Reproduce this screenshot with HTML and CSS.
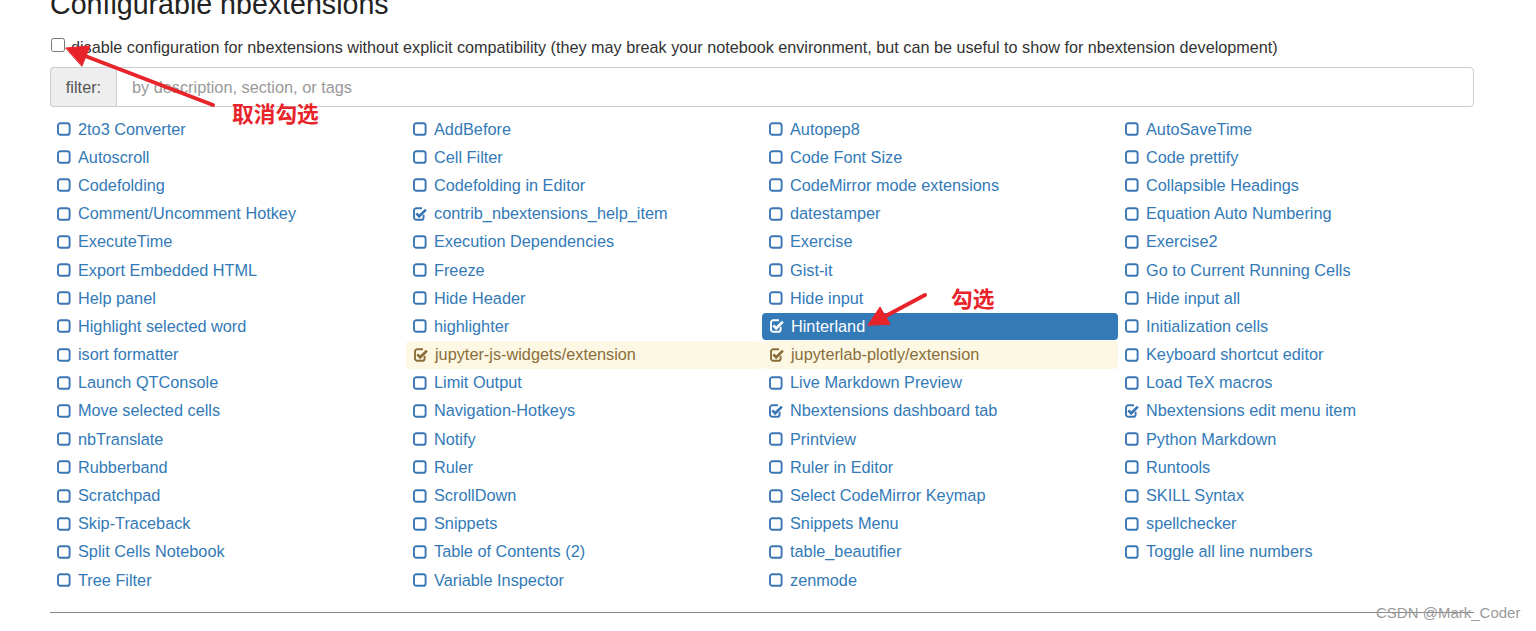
FILE: index.html
```html
<!DOCTYPE html>
<html>
<head>
<meta charset="utf-8">
<link rel="stylesheet" href="styles.css">
</head>
<body>
<svg width="0" height="0" class="defs">
  <defs>
    <symbol id="sq" viewBox="0 0 14 14">
      <rect x="1" y="1.2" width="11.6" height="11.6" rx="2.4" fill="none" stroke="currentColor" stroke-width="1.9"/>
    </symbol>
    <symbol id="ck" viewBox="0 0 14 14">
      <path d="M10.6 7.8V10.4a2.4 2.4 0 0 1-2.4 2.4H3.4a2.4 2.4 0 0 1-2.4-2.4V3.6a2.4 2.4 0 0 1 2.4-2.4H9" fill="none" stroke="currentColor" stroke-width="1.9"/>
      <path d="M3.3 6.4 6.2 9.3 12.9 2.6" fill="none" stroke="currentColor" stroke-width="2.7" stroke-linejoin="miter"/>
    </symbol>
  </defs>
</svg>
<div class="page">
  <h3 class="title">Configurable nbextensions</h3>
  <label class="compat"><input type="checkbox" class="compat-box"><span>disable configuration for nbextensions without explicit compatibility (they may break your notebook environment, but can be useful to show for nbextension development)</span></label>
  <div class="filter">
    <span class="filter-addon">filter:</span>
    <input class="filter-input" type="text" placeholder="by description, section, or tags">
  </div>
  <div class="grid">
    <div class="item"><svg class="ic"><use href="#sq"/></svg><span>2to3 Converter</span></div>
    <div class="item"><svg class="ic"><use href="#sq"/></svg><span>AddBefore</span></div>
    <div class="item"><svg class="ic"><use href="#sq"/></svg><span>Autopep8</span></div>
    <div class="item"><svg class="ic"><use href="#sq"/></svg><span>AutoSaveTime</span></div>

    <div class="item"><svg class="ic"><use href="#sq"/></svg><span>Autoscroll</span></div>
    <div class="item"><svg class="ic"><use href="#sq"/></svg><span>Cell Filter</span></div>
    <div class="item"><svg class="ic"><use href="#sq"/></svg><span>Code Font Size</span></div>
    <div class="item"><svg class="ic"><use href="#sq"/></svg><span>Code prettify</span></div>

    <div class="item"><svg class="ic"><use href="#sq"/></svg><span>Codefolding</span></div>
    <div class="item"><svg class="ic"><use href="#sq"/></svg><span>Codefolding in Editor</span></div>
    <div class="item"><svg class="ic"><use href="#sq"/></svg><span>CodeMirror mode extensions</span></div>
    <div class="item"><svg class="ic"><use href="#sq"/></svg><span>Collapsible Headings</span></div>

    <div class="item"><svg class="ic"><use href="#sq"/></svg><span>Comment/Uncomment Hotkey</span></div>
    <div class="item"><svg class="ic"><use href="#ck"/></svg><span>contrib_nbextensions_help_item</span></div>
    <div class="item"><svg class="ic"><use href="#sq"/></svg><span>datestamper</span></div>
    <div class="item"><svg class="ic"><use href="#sq"/></svg><span>Equation Auto Numbering</span></div>

    <div class="item"><svg class="ic"><use href="#sq"/></svg><span>ExecuteTime</span></div>
    <div class="item"><svg class="ic"><use href="#sq"/></svg><span>Execution Dependencies</span></div>
    <div class="item"><svg class="ic"><use href="#sq"/></svg><span>Exercise</span></div>
    <div class="item"><svg class="ic"><use href="#sq"/></svg><span>Exercise2</span></div>

    <div class="item"><svg class="ic"><use href="#sq"/></svg><span>Export Embedded HTML</span></div>
    <div class="item"><svg class="ic"><use href="#sq"/></svg><span>Freeze</span></div>
    <div class="item"><svg class="ic"><use href="#sq"/></svg><span>Gist-it</span></div>
    <div class="item"><svg class="ic"><use href="#sq"/></svg><span>Go to Current Running Cells</span></div>

    <div class="item"><svg class="ic"><use href="#sq"/></svg><span>Help panel</span></div>
    <div class="item"><svg class="ic"><use href="#sq"/></svg><span>Hide Header</span></div>
    <div class="item"><svg class="ic"><use href="#sq"/></svg><span>Hide input</span></div>
    <div class="item"><svg class="ic"><use href="#sq"/></svg><span>Hide input all</span></div>

    <div class="item"><svg class="ic"><use href="#sq"/></svg><span>Highlight selected word</span></div>
    <div class="item"><svg class="ic"><use href="#sq"/></svg><span>highlighter</span></div>
    <div class="item active"><svg class="ic"><use href="#ck"/></svg><span>Hinterland</span></div>
    <div class="item"><svg class="ic"><use href="#sq"/></svg><span>Initialization cells</span></div>

    <div class="item"><svg class="ic"><use href="#sq"/></svg><span>isort formatter</span></div>
    <div class="item warn"><svg class="ic"><use href="#ck"/></svg><span>jupyter-js-widgets/extension</span></div>
    <div class="item warn"><svg class="ic"><use href="#ck"/></svg><span>jupyterlab-plotly/extension</span></div>
    <div class="item"><svg class="ic"><use href="#sq"/></svg><span>Keyboard shortcut editor</span></div>

    <div class="item"><svg class="ic"><use href="#sq"/></svg><span>Launch QTConsole</span></div>
    <div class="item"><svg class="ic"><use href="#sq"/></svg><span>Limit Output</span></div>
    <div class="item"><svg class="ic"><use href="#sq"/></svg><span>Live Markdown Preview</span></div>
    <div class="item"><svg class="ic"><use href="#sq"/></svg><span>Load TeX macros</span></div>

    <div class="item"><svg class="ic"><use href="#sq"/></svg><span>Move selected cells</span></div>
    <div class="item"><svg class="ic"><use href="#sq"/></svg><span>Navigation-Hotkeys</span></div>
    <div class="item"><svg class="ic"><use href="#ck"/></svg><span>Nbextensions dashboard tab</span></div>
    <div class="item"><svg class="ic"><use href="#ck"/></svg><span>Nbextensions edit menu item</span></div>

    <div class="item"><svg class="ic"><use href="#sq"/></svg><span>nbTranslate</span></div>
    <div class="item"><svg class="ic"><use href="#sq"/></svg><span>Notify</span></div>
    <div class="item"><svg class="ic"><use href="#sq"/></svg><span>Printview</span></div>
    <div class="item"><svg class="ic"><use href="#sq"/></svg><span>Python Markdown</span></div>

    <div class="item"><svg class="ic"><use href="#sq"/></svg><span>Rubberband</span></div>
    <div class="item"><svg class="ic"><use href="#sq"/></svg><span>Ruler</span></div>
    <div class="item"><svg class="ic"><use href="#sq"/></svg><span>Ruler in Editor</span></div>
    <div class="item"><svg class="ic"><use href="#sq"/></svg><span>Runtools</span></div>

    <div class="item"><svg class="ic"><use href="#sq"/></svg><span>Scratchpad</span></div>
    <div class="item"><svg class="ic"><use href="#sq"/></svg><span>ScrollDown</span></div>
    <div class="item"><svg class="ic"><use href="#sq"/></svg><span>Select CodeMirror Keymap</span></div>
    <div class="item"><svg class="ic"><use href="#sq"/></svg><span>SKILL Syntax</span></div>

    <div class="item"><svg class="ic"><use href="#sq"/></svg><span>Skip-Traceback</span></div>
    <div class="item"><svg class="ic"><use href="#sq"/></svg><span>Snippets</span></div>
    <div class="item"><svg class="ic"><use href="#sq"/></svg><span>Snippets Menu</span></div>
    <div class="item"><svg class="ic"><use href="#sq"/></svg><span>spellchecker</span></div>

    <div class="item"><svg class="ic"><use href="#sq"/></svg><span>Split Cells Notebook</span></div>
    <div class="item"><svg class="ic"><use href="#sq"/></svg><span>Table of Contents (2)</span></div>
    <div class="item"><svg class="ic"><use href="#sq"/></svg><span>table_beautifier</span></div>
    <div class="item"><svg class="ic"><use href="#sq"/></svg><span>Toggle all line numbers</span></div>

    <div class="item"><svg class="ic"><use href="#sq"/></svg><span>Tree Filter</span></div>
    <div class="item"><svg class="ic"><use href="#sq"/></svg><span>Variable Inspector</span></div>
    <div class="item"><svg class="ic"><use href="#sq"/></svg><span>zenmode</span></div>
  </div>
  <hr class="rule">
</div>

<svg class="annot" width="1536" height="631" viewBox="0 0 1536 631">
  <g stroke="#e8232a" stroke-width="4" stroke-linecap="round" fill="#e8232a">
    <line x1="213" y1="105" x2="80" y2="54"/>
    <polygon points="66,48 90,46 82,66" stroke-width="1"/>
    <line x1="925" y1="295" x2="882" y2="318"/>
    <polygon points="868,325 880,307 890,324" stroke-width="1"/>
  </g>
</svg>
<div class="note note1">取消勾选</div>
<div class="note note2">勾选</div>
<div class="watermark">CSDN @Mark_Coder</div>
</body>
</html>
```
FILE: styles.css
```css
html, body {
  margin: 0;
  padding: 0;
  background: #fff;
  overflow: hidden;
}
body {
  font-family: "Liberation Sans", Arial, sans-serif;
  font-size: 16.3px;
  color: #333;
  width: 1536px;
  height: 631px;
  position: relative;
}
.defs {
  position: absolute;
  width: 0;
  height: 0;
}
.page {
  padding: 0 62px 0 50px;
}
.title {
  margin: -12px 0 0 0;
  font-size: 28.6px;
  font-weight: normal;
  line-height: 33px;
  color: #222;
}
.compat {
  display: flex;
  align-items: center;
  height: 20px;
  margin-top: 16px;
  font-size: 16.2px;
  color: #333;
}
.compat-box {
  margin: 0 6px 0 1px;
  width: 14px;
  height: 14px;
  position: relative;
  top: -2px;
}
.filter {
  display: flex;
  margin-top: 10px;
  height: 40px;
  box-sizing: border-box;
}
.filter-addon {
  display: flex;
  align-items: center;
  justify-content: center;
  width: 66px;
  box-sizing: border-box;
  background: #eee;
  border: 1px solid #ccc;
  border-right: none;
  border-radius: 4px 0 0 4px;
  color: #555;
  font-size: 16.3px;
}
.filter-input {
  flex: 1;
  border: 1px solid #ccc;
  border-radius: 0 4px 4px 0;
  padding: 0 15px;
  font-family: "Liberation Sans", Arial, sans-serif;
  font-size: 16.3px;
  color: #555;
  outline: none;
}
.filter-input::placeholder {
  color: #999;
}
.grid {
  display: grid;
  grid-template-columns: repeat(4, 356px);
  grid-auto-rows: 28.19px;
  margin-top: 8px;
}
.item {
  display: flex;
  align-items: center;
  padding-left: 7px;
  color: #337ab7;
  font-size: 16.3px;
  border-radius: 4px;
  white-space: nowrap;
}
.ic {
  width: 14px;
  height: 14px;
  margin-right: 7px;
  flex: none;
  color: #3a76b4;
}
.item.active {
  background: #337ab7;
  color: #fff;
  height: 27px;
  align-self: center;
  padding-left: 8px;
}
.item.active .ic {
  color: #fff;
}
.item.warn {
  background: #fcf8e3;
  color: #8a6d3b;
  padding-left: 8px;
}
.item.warn .ic {
  color: #8a6d3b;
}
.rule {
  margin: 18px 0 0 0;
  border: none;
  border-top: 1px solid #8a8a8a;
}
.annot {
  position: absolute;
  left: 0;
  top: 0;
  pointer-events: none;
}
.note {
  position: absolute;
  font-family: "Noto Sans CJK SC", sans-serif;
  font-weight: bold;
  font-size: 21.7px;
  line-height: 24px;
  color: #e8232a;
}
.note1 {
  left: 232px;
  top: 101px;
}
.note2 {
  left: 951px;
  top: 286px;
}
.watermark {
  position: absolute;
  left: 1376px;
  top: 604px;
  font-family: "Liberation Sans", Arial, sans-serif;
  font-size: 15px;
  color: #9a9a9a;
}
```
